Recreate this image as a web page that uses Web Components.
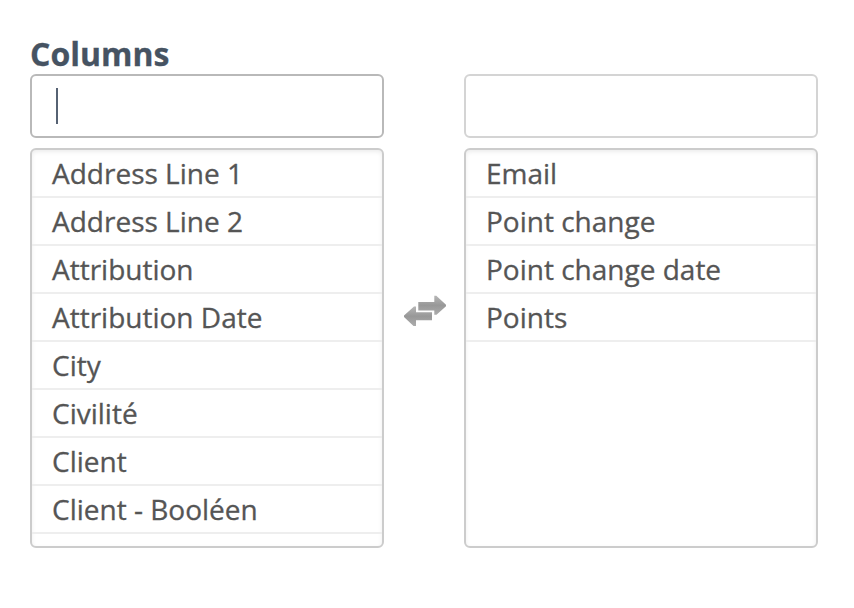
<!DOCTYPE html>
<html lang="en">
<head>
  <meta charset="utf-8">
  <title>Columns</title>
  <style>
    body {
      margin: 0;
      background: #fff;
      color: #555;
      font-family: "Open Sans", sans-serif;
      font-size: 28px;
    }
  </style>
</head>
<body>
  <column-picker label="Columns">
    <column-list slot="available" active>
      <column-item>Address Line 1</column-item>
      <column-item>Address Line 2</column-item>
      <column-item>Attribution</column-item>
      <column-item>Attribution Date</column-item>
      <column-item>City</column-item>
      <column-item>Civilité</column-item>
      <column-item>Client</column-item>
      <column-item>Client - Booléen</column-item>
    </column-list>
    <column-list slot="selected">
      <column-item>Email</column-item>
      <column-item>Point change</column-item>
      <column-item>Point change date</column-item>
      <column-item>Points</column-item>
    </column-list>
  </column-picker>

  <script>
    // attach an open shadow root filled from a template string
    function render(element, html) {
      const template = document.createElement('template');
      template.innerHTML = html;
      element.attachShadow({ mode: 'open' });
      element.shadowRoot.appendChild(template.content.cloneNode(true));
    }

    // one row of a list
    class ColumnItem extends HTMLElement {
      constructor() {
        super();
        render(this, `
          <style>
            :host {
              display: block;
              box-sizing: border-box;
              height: 48px;
              padding: 0 20px;
              border-bottom: 2px solid #eee;
              line-height: 46px;
              white-space: nowrap;
              -webkit-text-stroke: 0.3px;
            }
          </style>
          <slot></slot>
        `);
      }
    }

    // the search box above a list, the caret is shown when it is active
    class ColumnSearch extends HTMLElement {
      constructor() {
        super();
        render(this, `
          <style>
            :host {
              display: flex;
              align-items: center;
              box-sizing: border-box;
              height: 64px;
              padding: 0 24px;
              border: 2px solid #d4d4d4;
              border-radius: 6px;
            }
            :host([active]) {
              border-color: #b9b9b9;
            }
            .caret {
              display: none;
              width: 2px;
              height: 36px;
              background: #566273;
            }
            :host([active]) .caret {
              display: block;
            }
          </style>
          <span class="caret"></span>
        `);
      }
    }

    class ColumnList extends HTMLElement {
      constructor() {
        super();
        render(this, `
          <style>
            :host {
              display: flex;
              flex-direction: column;
              gap: 10px;
              width: 354px;
            }
            .list {
              box-sizing: border-box;
              height: 400px;
              border: 2px solid #ccc;
              border-radius: 6px;
              box-shadow: inset 0 2px 4px rgba(0, 0, 0, 0.075);
              overflow: hidden;
            }
          </style>
          <column-search></column-search>
          <div class="list"><slot></slot></div>
        `);
      }

      connectedCallback() {
        const search = this.shadowRoot.querySelector('column-search');
        search.toggleAttribute('active', this.hasAttribute('active'));
      }
    }

    // two lists with the switch arrows in between
    class ColumnPicker extends HTMLElement {
      constructor() {
        super();
        render(this, `
          <style>
            :host {
              display: block;
              padding: 32px 36px 0 30px;
            }
            h2 {
              margin: 0;
              height: 42px;
              color: #465362;
              font-size: 32px;
              font-weight: 700;
              line-height: 44px;
              -webkit-text-stroke: 0.3px;
            }
            .lists {
              display: grid;
              grid-template-columns: 354px 80px 354px;
              align-items: center;
            }
            svg {
              display: block;
              justify-self: center;
              width: 44px;
              height: 32px;
            }
          </style>
          <h2></h2>
          <div class="lists">
            <slot name="available"></slot>
            <svg viewBox="0 0 44 32">
              <defs>
                <linearGradient id="fade" x1="0" y1="0" x2="0" y2="1">
                  <stop offset="0" stop-color="#b6b6b6"/>
                  <stop offset="0.5" stop-color="#989898"/>
                  <stop offset="1" stop-color="#acacac"/>
                </linearGradient>
              </defs>
              <g fill="url(#fade)">
                <path d="M16.3 7H32.3V0.8H34.3L44 9.7V11.3L34.5 19.8H32.3V15.5H16.3Z"/>
                <path d="M30 17.2H14V11.5H12L2 20.5V22L11.5 31H14V25.3H30Z"/>
              </g>
            </svg>
            <slot name="selected"></slot>
          </div>
        `);
      }

      connectedCallback() {
        this.shadowRoot.querySelector('h2').textContent = this.getAttribute('label');
      }
    }

    window.customElements.define('column-item', ColumnItem);
    window.customElements.define('column-search', ColumnSearch);
    window.customElements.define('column-list', ColumnList);
    window.customElements.define('column-picker', ColumnPicker);
  </script>
</body>
</html>
